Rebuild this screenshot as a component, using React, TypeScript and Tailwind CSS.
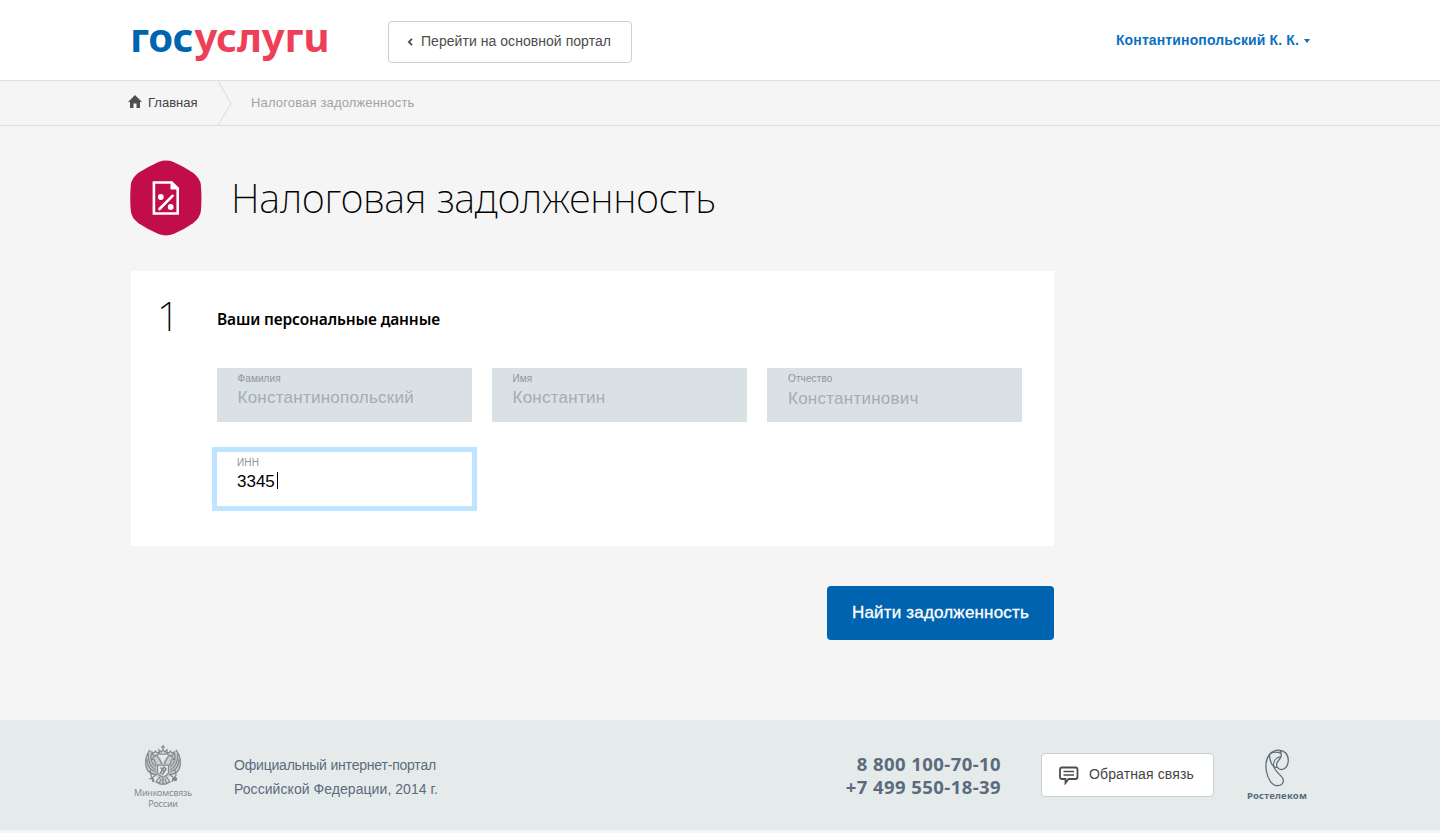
function Logo() {
  return (
    <svg width="210" height="60" viewBox="0 0 210 60" className="block" fontFamily="'Noto Sans', sans-serif" fontWeight="700" fontSize="40">
      <text x="3" y="42" fill="#0065b1" textLength="63.500">гос</text>
      <text x="67.500" y="42" fill="#ee3f58" textLength="135">услугu</text>
    </svg>
  );
}

function TaxIcon() {
  return (
    <svg width="72" height="76" viewBox="0 0 72 76" className="block">
      <path d="M28.500 1.900Q36 -1 43.500 1.900Q54 6.500 63 12.800Q70 18 70.900 25Q72 38 70.900 51Q70 58 63 63.200Q54 69.500 43.500 74.100Q36 77 28.500 74.100Q18 69.500 8.500 63.200Q1.500 58 .8 51Q-.3 38 .8 25Q1.500 18 8.500 12.800Q18 6.500 28.500 1.900Z" fill="#c10e4a" />
      <path d="M23.900 22.500H41.500L47.700 28.500V53.500H23.900Z" fill="none" stroke="#fff" strokeWidth="2.600" />
      <path d="M40.500 21.500V29.500H49V28L42 21.200Z" fill="#fff" />
      <path d="M29.500 49L42.500 35.800" stroke="#fff" strokeWidth="2.600" strokeLinecap="round" />
      <circle cx="30.800" cy="37" r="2.900" fill="#fff" />
      <circle cx="40.700" cy="47" r="2.900" fill="#fff" />
    </svg>
  );
}

function Emblem() {
  return (
    <svg width="38" height="42" viewBox="0 0 38 42" className="block">
      <g fill="#858b8e" fillOpacity=".3">
        <path d="M7 5C1 10 0 18 2 24C4 29 10 31 14 32L17 39H21L24 32C28 31 34 29 36 24C38 18 37 10 31 5L28 12L22 12L19 18L16 12L10 12Z" />
      </g>
      <g fill="none" stroke="#858b8e" strokeWidth="1.250">
        <path d="M19 0V5M17 2H21M16 9L15 5L17.500 7L19 4.500L20.500 7L23 5L22 9ZM9 10L8 7L10 8L11.500 6L13 8L15 7L14 10ZM24 10L23 7L25 8L26.500 6L28 8L30 7L29 10Z" />
        <path d="M17.500 19C17 15 15 15 14.500 12.500C13 10 10.500 10.500 9.500 12.500L7.500 14L10.500 15C11 17 11 18 12.500 20M20.500 19C21 15 23 15 23.500 12.500C25 10 27.500 10.500 28.500 12.500L30.500 14L27.500 15C27 17 27 18 25.500 20" />
        <path d="M6 5C2 10 1 15 2 21C3 27 8 30 13 29M32 5C36 10 37 15 36 21C35 27 30 30 25 29" />
        <path d="M4.500 9C4 15 5 21 12 25M3 14C3 21 6 25 12 27M7.500 8C6 14 8 19 12 22M33.500 9C34 15 33 21 26 25M35 14C35 21 32 25 26 27M30.500 8C32 14 30 19 26 22" />
        <path d="M13.500 20H24.500V27C24.500 30 21 31 19 32.500C17 31 13.500 30 13.500 27Z" fill="#e5ebeb" />
        <path d="M16 29L20 22L22 24L18 30M16.500 22.500L20 26" strokeWidth="1.600" />
        <path d="M13 29L8 33L5 34M9 33L10 37M25 29L30 33L33 34M29 33L28 37M6 25L7 30L9 37M31 25L32 30L30 34" />
        <path d="M16 32L13 35L12 38M22 32L25 35L26 38M19 33V40M17 34L15 39M21 34L23 39M12 36C16 40.500 22 40.500 26 36" />
        <circle cx="31" cy="34" r="1.600" fill="#858b8e" />
      </g>
    </svg>
  );
}

function RostelecomMark() {
  return (
    <svg width="24" height="38" viewBox="0 0 24 38" className="block" fill="none" stroke="#5b6b7c" strokeWidth="1.250">
      <path d="M4.500 5.500C7 2 10.500 1 13.500 1C19 1 23.300 5 23.300 11C23.300 16.500 20.500 20.500 16.500 20.500C13 20.500 11 17.500 11.800 14.500C12.500 11.500 16 10 16.300 6.500C16.400 4 15.500 2 14 1" />
      <path d="M4.500 5.500C.8 10 .3 16 1.500 22.500C3 31 7.500 36.700 12.500 36.700C16.500 36.700 19 34 18.200 30.500C17 26 9 22.500 8.500 16.500C8.300 12 11 8.200 16.100 7.700" />
      <path d="M4.500 5.500C4.500 12 7 18.500 12.300 18.500M4.500 5.500C7.500 2.500 11 2.500 16.200 4.500" />
    </svg>
  );
}

function Field({ label, value, low }: { label: string; value: string; low?: boolean }) {
  return (
    <div className={`h-[54px] w-[255px] bg-[#dae1e4] ${low ? "pl-[21px]" : "pl-[20.500px]"}`}>
      <div className="mt-[4px] h-[13px] text-[10px] leading-[13px] tracking-[0.120px] text-[#8d969b]">{label}</div>
      <div className={`${low ? "mt-[4px]" : "mt-[3px]"} text-[17px] leading-[20px] tracking-[0.250px] text-[#a3adb3]`}>{value}</div>
    </div>
  );
}

export default function App() {
  return (
    <div className="flex h-[833px] w-[1440px] flex-col overflow-hidden bg-[#f5f5f5] font-['Liberation_Sans',Arial,sans-serif] text-black">
      <header className="flex h-[81px] shrink-0 items-start border-b border-[#dfdfdf] bg-white pr-[130px] pl-[127px]">
        <div className="mt-[10px] w-[261px]"><Logo /></div>
        <button className="mt-[21px] flex h-[42px] w-[244px] items-center rounded-[4px] border border-[#cbd0d3] pb-[2px] pl-[18px] text-[14px] tracking-[0.046px] text-[#4c4c4c]">
          <svg width="7" height="8" viewBox="0 0 7 8" className="mt-[2px] mr-[7px]"><path d="M5 .8L1.800 4L5 7.200" fill="none" stroke="#4c4c4c" strokeWidth="1.800" /></svg>
          Перейти на основной портал
        </button>
        <div className="mt-[31px] ml-auto flex items-center text-[14px] leading-[18px] font-bold tracking-[0.130px] text-[#0b70c0]">
          Контантинопольский К. К.
          <svg width="6" height="4" viewBox="0 0 6 4" className="mt-px ml-[5px]"><path d="M0 0H6L3 4Z" fill="#0b70c0" /></svg>
        </div>
      </header>

      <nav className="flex h-[45px] shrink-0 items-start border-b border-[#dfdfdf] pl-[128px] text-[13px]">
        <svg width="14" height="13" viewBox="0 0 14 13" className="mt-[14px]"><path d="M7 0L14 7H12V13H8.500V8.500H5.500V13H2V7H0Z" fill="#4f4f4f" /></svg>
        <span className="mt-[13px] ml-[6px] w-[70px] leading-[17px] text-[#444]">Главная</span>
        <svg width="14" height="44" viewBox="0 0 14 44"><path d="M0 0L13 22.500L0 44.500" fill="none" stroke="#d9d9d9" /></svg>
        <span className="mt-[13px] ml-[19px] leading-[17px] tracking-[0.154px] text-[#a3a3a3]">Налоговая задолженность</span>
      </nav>

      <main className="flex h-[594px] shrink-0 flex-col pt-[34px] pl-[130px]">
        <div className="flex h-[76px] items-center">
          <TaxIcon />
          <h1 className="ml-[29px] font-['Noto_Sans',sans-serif] text-[40px] leading-[54px] font-[250] tracking-[-0.190px]">Налоговая задолженность</h1>
        </div>
        <section className="mt-[35px] ml-px h-[275px] w-[923px] bg-white">
          <div className="flex h-[97px]">
            <div className="mt-[17px] w-[86px] pl-[26px] font-['Noto_Sans',sans-serif] text-[40px] leading-[56px] font-[250]">1</div>
            <h2 className="mt-[37px] font-['Noto_Sans',sans-serif] text-[15.500px] leading-[22px] font-semibold tracking-[-0.140px]">Ваши персональные данные</h2>
          </div>
          <div className="flex gap-5 pl-[86px]">
            <Field label="Фамилия" value="Константинопольский" />
            <Field label="Имя" value="Константин" />
            <Field label="Отчество" value="Константинович" low />
          </div>
          <div className="mt-[25px] ml-[81px] h-[64px] w-[265px] border-[5px] border-[#bfe4ff] pl-[20px]">
            <div className="mt-[4px] h-[13px] text-[10px] leading-[13px] tracking-[0.120px] text-[#8d969b]">ИНН</div>
            <div className="mt-[3px] flex h-5 items-center text-[17px] leading-[20px]">3345<span className="mb-[4px] ml-[2px] h-[17px] w-px bg-black" /></div>
          </div>
        </section>
        <button className="mt-10 ml-[697px] h-[54px] w-[227px] shrink-0 rounded-[4px] bg-[#0063b0] text-[17px] tracking-[0.180px] text-white [-webkit-text-stroke:0.300px_white]">Найти задолженность</button>
      </main>

      <footer className="flex h-[110px] shrink-0 items-start bg-[#e5ebeb] pl-[128px] text-[#5b6b7c]">
        <div className="mt-[25px] flex w-[70px] flex-col items-center font-['Noto_Sans',sans-serif] text-[9px] leading-[11px] text-[#858b8e]">
          <Emblem />
          <span className="tracking-[-0.200px]">Минкомсвязь</span>
          <span className="tracking-[-0.200px]">России</span>
        </div>
        <div className="mt-[33px] ml-[36px] w-[500px] text-[14px] leading-[24px]">
          <p className="tracking-[-0.200px]">Официальный интернет-портал</p>
          <p className="tracking-[0.057px]">Российской Федерации, 2014 г.</p>
        </div>
        <div className="mt-[32px] w-[267px] text-right font-['Noto_Sans',sans-serif] text-[18.500px] leading-[23px] font-bold tracking-[0.420px]">
          <p>8 800 100-70-10</p>
          <p>+7 499 550-18-39</p>
        </div>
        <button className="mt-[33px] ml-[40px] flex h-[44px] w-[173px] items-center rounded-[4px] border border-[#c9cfd2] bg-white pl-[17px] text-[14px] tracking-[0.130px] text-[#444]">
          <svg width="20" height="19" viewBox="0 0 20 19" className="mt-px mr-[10px]" fill="none" stroke="#4c4c4c" strokeWidth="1.800"><path d="M3 1.500H16.500Q18.500 1.500 18.500 3.500V11Q18.500 13 16.500 13H9.500L6.500 17V13H3Q1 13 1 11V3.500Q1 1.500 3 1.500Z" /><path d="M4.500 5.500H15M4.500 9H15" strokeWidth="1.600" /></svg>
          <span className="pb-[2px]">Обратная связь</span>
        </button>
        <div className="mt-[29px] ml-[32px] flex w-[62px] flex-col items-center font-['Noto_Sans',sans-serif] text-[9.500px] leading-[12px] font-bold">
          <RostelecomMark />
          <span className="mt-[3px] tracking-[0.220px]">Ростелеком</span>
        </div>
      </footer>
    </div>
  );
}
